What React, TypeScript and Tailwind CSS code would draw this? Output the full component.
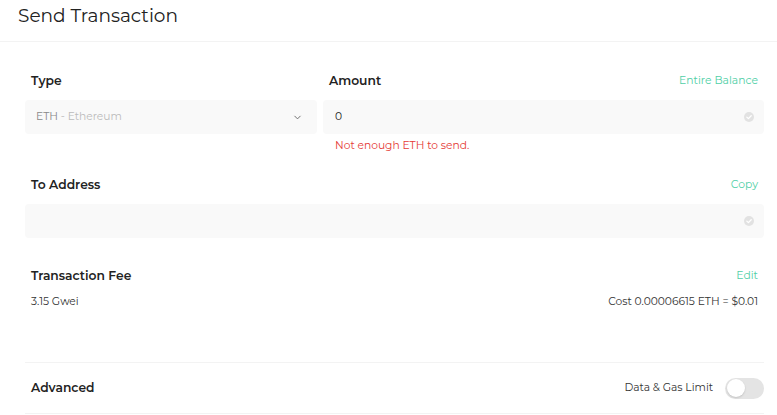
import { ChevronDown } from 'lucide-react'

function CheckDot() {
  return (
    <svg width="10" height="10" viewBox="0 0 10 10" className="shrink-0">
      <circle cx="5" cy="5" r="5" fill="#e2e2e2" />
      <path d="M2.8 5.1 L4.4 6.6 L7.2 3.7" fill="none" stroke="#fff" strokeWidth="1.3" strokeLinecap="round" strokeLinejoin="round" />
    </svg>
  )
}

function Label({ title, action }: { title: string; action?: string }) {
  return (
    <div className="flex items-center justify-between px-[6px] h-[20px] pt-[1px]">
      <span className="text-[12.3px] font-semibold text-[#222]">{title}</span>
      {action && <span className="text-[10.8px] text-[#4fcfa6]">{action}</span>}
    </div>
  )
}

export default function App() {
  return (
    <div className="min-h-screen bg-white font-['Montserrat','Open_Sans',sans-serif] text-[#222]">
      {/* Header */}
      <header className="h-[42px] border-b border-[#f3f3f3] pl-[18px]">
        <h1 className="text-[18.5px] leading-[32px] text-[#222]">Send Transaction</h1>
      </header>

      <div className="pl-[25px] pr-[13px]">
        {/* Type / Amount */}
        <div className="grid grid-cols-[292px_1fr] gap-x-[6px] pt-[29px]">
          <div>
            <Label title="Type" />
            <div className="mt-[9px] h-[34px] rounded bg-[#f9f9f9] flex items-center justify-between pl-[11px] pr-[14px] text-[10.7px]">
              <span>
                <span className="text-[#888]">ETH</span>
                <span className="text-[#bbb]"> - Ethereum</span>
              </span>
              <ChevronDown size={11} strokeWidth={2} className="text-[#666]" />
            </div>
          </div>
          <div>
            <Label title="Amount" action="Entire Balance" />
            <div className="mt-[9px] h-[34px] rounded bg-[#f9f9f9] flex items-center justify-between pl-[12px] pr-[10px] text-[10.7px]">
              <span className="text-[#222]">0</span>
              <CheckDot />
            </div>
            <div className="mt-[2px] h-[20px] flex items-center pl-[12px] text-[10.7px] text-[#e53935]">
              Not enough ETH to send.
            </div>
          </div>
        </div>

        {/* To Address */}
        <div className="mt-[19px]">
          <Label title="To Address" action="Copy" />
          <div className="mt-[9px] h-[34px] rounded bg-[#f9f9f9] flex items-center justify-end pr-[10px]">
            <CheckDot />
          </div>
        </div>

        {/* Transaction Fee */}
        <div className="mt-[28px]">
          <Label title="Transaction Fee" action="Edit" />
          <div className="mt-[6px] h-[20px] flex items-center justify-between px-[6px] text-[10.7px] text-[#333]">
            <span>3.15 Gwei</span>
            <span>Cost 0.00006615 ETH = $0.01</span>
          </div>
        </div>

        {/* Advanced */}
        <div className="mt-[50px] border-t border-b border-[#f3f3f3] h-[52px] flex items-center justify-between pl-[6px]">
          <span className="text-[12.3px] font-semibold text-[#222]">Advanced</span>
          <div className="flex items-center gap-[12px]">
            <span className="text-[10.7px] text-[#333]">Data &amp; Gas Limit</span>
            <div className="w-[39px] h-[21px] rounded-full bg-[#e4e4e4] p-[1.5px] flex items-center">
              <div className="w-[18px] h-[18px] rounded-full bg-white shadow-[0_1px_2px_rgba(0,0,0,0.15)]" />
            </div>
          </div>
        </div>
      </div>
    </div>
  )
}
